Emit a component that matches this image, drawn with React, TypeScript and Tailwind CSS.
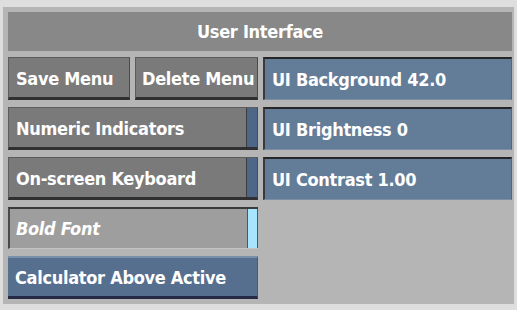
const font = { fontFamily: '"DejaVu Sans Condensed", "DejaVu Sans", sans-serif' };

function RaisedButton({ label, strip, pad = 'pl-[7px]' }: { label: string; strip?: boolean; pad?: string }) {
  return (
    <div className="flex h-[43px] border-t border-l border-r border-t-[#5c5c5c] border-l-[#5c5c5c] border-r-[#4a4a4a] border-b-[3px] border-b-[#303030] bg-[#7a7a7a]">
      <div
        className={`flex flex-1 items-center overflow-hidden whitespace-nowrap ${pad} pt-[2px] text-[18px] font-bold tracking-[-0.3px] text-white`}
        style={font}
      >
        {label}
      </div>
      {strip && <div className="w-[11px] bg-[#4e6789] border-l border-[#3c3c3c]" />}
    </div>
  );
}

function ValueField({ label }: { label: string }) {
  return (
    <div
      className="flex h-[43px] items-center whitespace-nowrap border-t-2 border-l-2 border-t-[#262626] border-l-[#3a3a3a] border-r border-r-[#54667a] border-b border-b-[#7b8ea3] bg-[#637c98] pl-[7px] pt-[1px] text-[18px] font-bold tracking-[-0.3px] text-white"
      style={font}
    >
      {label}
    </div>
  );
}

export default function App() {
  return (
    <div className="w-[517px] h-[310px] bg-[#dedede] pt-[7px] pl-[3px] pr-[3px] pb-[6px]">
      <div className="h-full bg-[#b5b5b5] pl-[5px] pr-[2px] pt-[5px]">
        <div
          className="flex h-[39px] items-center justify-center bg-[#888888] text-[18px] font-bold tracking-[-0.3px] text-white"
          style={font}
        >
          User Interface
        </div>

        <div className="mt-[6px] grid grid-cols-[250px_249px] gap-x-[5px] gap-y-[7px]">
          <div className="grid grid-cols-[122px_123px] gap-x-[5px]">
            <RaisedButton label="Save Menu" />
            <RaisedButton label="Delete Menu" pad="pl-[6px]" />
          </div>
          <ValueField label="UI Background 42.0" />

          <RaisedButton label="Numeric Indicators" strip />
          <ValueField label="UI Brightness 0" />

          <RaisedButton label="On-screen Keyboard" strip />
          <ValueField label="UI Contrast 1.00" />

          <div className="flex h-[42px] border-t-2 border-l-2 border-t-[#3a3a3a] border-l-[#4a4a4a] border-b border-b-[#c4c4c4] bg-[#9e9e9e]">
            <div
              className="flex flex-1 items-center pl-[6px] text-[18px] font-bold italic tracking-[-0.3px] text-white"
              style={font}
            >
              Bold Font
            </div>
            <div className="w-[11px] bg-[#a6e4ff] border-l border-r border-[#555555]" />
          </div>
          <div />

          <div
            className="flex h-[43px] items-center border-t-2 border-t-[#7b90aa] border-b-[3px] border-b-[#262a44] border-r border-r-[#445a78] bg-[#566f8f] pl-[7px] text-[18px] font-bold tracking-[-0.3px] text-white"
            style={font}
          >
            Calculator Above Active
          </div>
          <div />
        </div>
      </div>
    </div>
  );
}
